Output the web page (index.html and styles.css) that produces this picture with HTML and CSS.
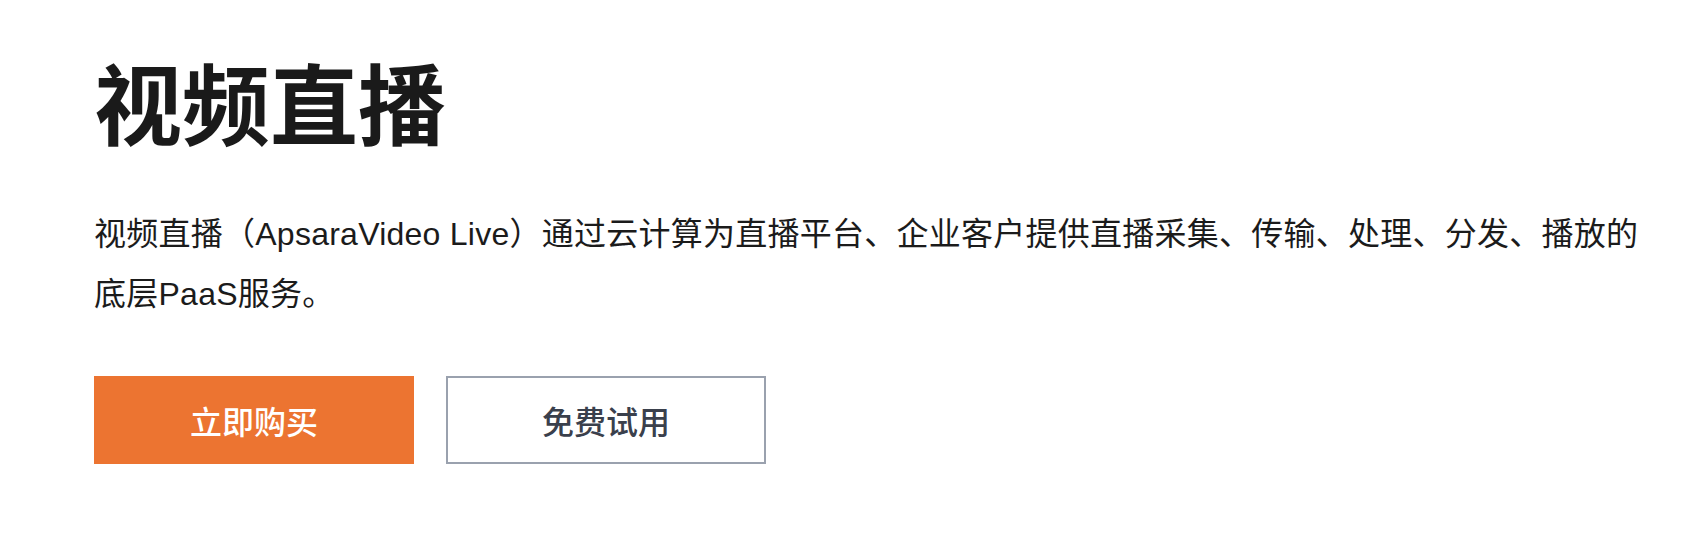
FILE: index.html
```html
<!DOCTYPE html>
<html lang="zh-CN">
<head>
    <meta charset="UTF-8">
    <meta name="viewport" content="width=device-width, initial-scale=1.0">
    <title>视频直播</title>
    <link rel="stylesheet" href="styles.css">
</head>
<body>
    <div class="hero">
        <h1>视频直播</h1>
        <p class="desc">视频直播（ApsaraVideo Live）通过云计算为直播平台、企业客户提供直播采集、传输、处理、分发、播放的底层PaaS服务。</p>
        <div class="actions">
            <a class="btn btn-primary" href="#">立即购买</a>
            <a class="btn btn-ghost" href="#">免费试用</a>
        </div>
    </div>
</body>
</html>
```

FILE: styles.css
```css
body {
    font-family: 'Liberation Sans', 'Noto Sans CJK SC', sans-serif;
    margin: 0;
    padding: 0;
    background-color: white;
    color: #1b1b1b;
}

.hero {
    padding: 55px 0 0 94px;
}

h1 {
    margin: 0;
    font-size: 88px;
    line-height: 106px;
    font-weight: 700;
    color: #1a1a1a;
}

.desc {
    width: 1575px;
    margin: 43px 0 0;
    font-size: 32px;
    line-height: 60px;
    letter-spacing: 0.25px;
}

.actions {
    display: flex;
    gap: 32px;
    margin-top: 52px;
}

.btn {
    display: flex;
    align-items: center;
    justify-content: center;
    width: 320px;
    height: 88px;
    box-sizing: border-box;
    font-size: 32px;
    font-weight: 500;
    text-decoration: none;
}

.btn-primary {
    background-color: #ec7431;
    color: white;
}

.btn-ghost {
    border: 2px solid #9aa1ae;
    color: #3a404c;
    background-color: white;
}
```
